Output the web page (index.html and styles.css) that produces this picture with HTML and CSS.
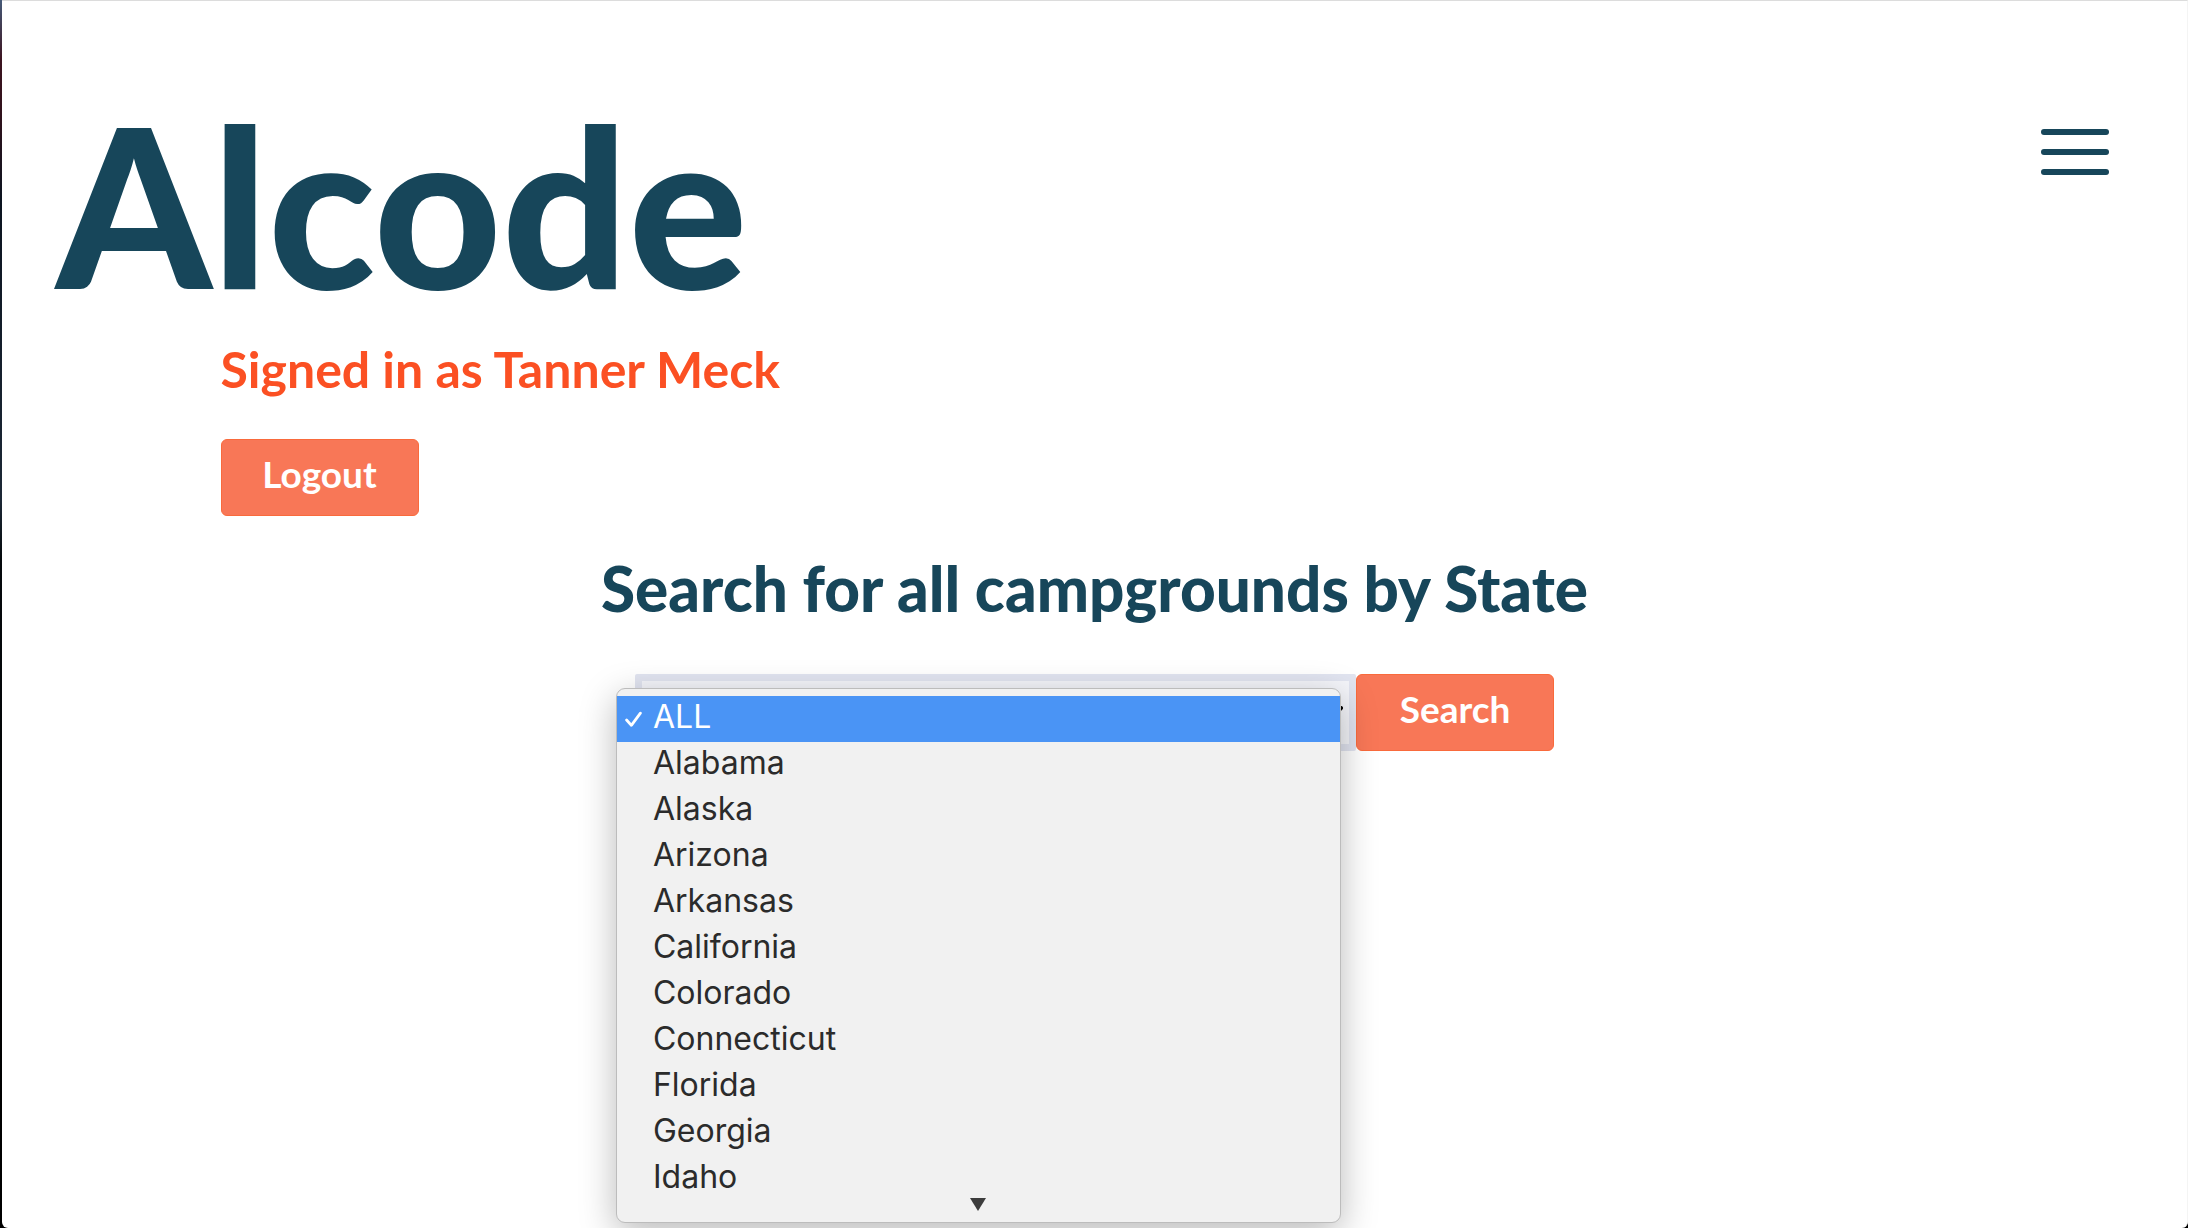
FILE: index.html
```html
<!DOCTYPE html>
<html lang="en">
<head>
<meta charset="utf-8">
<meta name="viewport" content="width=device-width, initial-scale=1">
<title>Alcode</title>
<link rel="stylesheet" href="styles.css">
</head>
<body>
<div class="window">
  <header class="site-header">
    <h1 class="brand">Alcode</h1>
    <button class="menu-toggle" type="button" aria-label="Menu">
      <span class="menu-bar"></span>
      <span class="menu-bar"></span>
      <span class="menu-bar"></span>
    </button>
  </header>
  <main>
    <section class="account">
      <p class="account-name">Signed in as Tanner Meck</p>
      <button class="button" type="button">Logout</button>
    </section>
    <section class="search">
      <h2 class="search-title"><label for="state">Search for all campgrounds by State</label></h2>
      <form class="search-form">
        <div class="field">
          <select class="field-select" id="state">
            <option>ALL</option>
          </select>
          <svg class="field-arrow" viewBox="0 0 20 12" aria-hidden="true"><path d="M2 2l8 8 8-8" fill="none" stroke="#000" stroke-width="4" stroke-linecap="round"/></svg>
          <div class="popup">
            <ul class="options" role="listbox" aria-label="State">
              <li class="option option-selected" role="option" aria-selected="true">
                <svg class="check" viewBox="0 0 16 16" aria-hidden="true"><path d="M1.500 8.500l4.500 5L14.500 2" fill="none" stroke="#fff" stroke-width="2.600" stroke-linecap="round" stroke-linejoin="round"/></svg>ALL</li>
              <li class="option" role="option">Alabama</li>
              <li class="option" role="option">Alaska</li>
              <li class="option" role="option">Arizona</li>
              <li class="option" role="option">Arkansas</li>
              <li class="option" role="option">California</li>
              <li class="option" role="option">Colorado</li>
              <li class="option" role="option">Connecticut</li>
              <li class="option" role="option">Florida</li>
              <li class="option" role="option">Georgia</li>
              <li class="option" role="option">Idaho</li>
            </ul>
            <svg class="more" viewBox="0 0 16 13" aria-hidden="true"><path d="M0 0h16L8 13z" fill="#3c3c3c"/></svg>
          </div>
        </div>
        <button class="button" type="submit">Search</button>
      </form>
    </section>
  </main>
</div>
</body>
</html>
```
FILE: styles.css
```css
* {
  box-sizing: border-box;
}

html {
  background: #000;
}

body {
  margin: 0;
  padding-left: 2px;
  min-height: 100vh;
  background: linear-gradient(#465a78, #3c1420 60px, #32121c 110px, #0c1420 200px, #1c2836 500px, #05090c 560px, #000 1100px);
  font-family: Lato, "Open Sans", sans-serif;
  color: #17465a;
}

.window {
  min-height: 100vh;
  border-top: 1px solid #dcdcdc;
  border-right: 1px solid #f4f4f4;
  border-radius: 0 0 6px 6px;
  background: #fff;
}

.site-header {
  display: flex;
  align-items: flex-start;
  justify-content: space-between;
  padding: 82px 78px 10px 54px;
}

.brand {
  margin: 0;
  font-size: 222px;
  font-weight: 900;
  line-height: 240px;
}

.menu-toggle {
  display: flex;
  flex-direction: column;
  gap: 14px;
  width: 68px;
  margin-top: 46px;
  padding: 0;
  border: 0;
  background: none;
}

.menu-bar {
  height: 6px;
  border-radius: 3px;
  background: #17465a;
}

.account {
  padding-left: 10%;
}

.account-name {
  margin: 0 0 34px;
  font-size: 50px;
  font-weight: 700;
  line-height: 72px;
  color: #fb5023;
}

.button {
  width: 198px;
  height: 77px;
  padding: 0 0 8px;
  border: 1px solid #f96a3c;
  border-radius: 6px;
  background: #f87757;
  font-family: inherit;
  font-size: 37px;
  font-weight: 700;
  color: #fff;
}

.search-title {
  margin: 36px 0 50px;
  font-size: 62px;
  font-weight: 900;
  line-height: 72px;
  text-align: center;
}

.search-form {
  display: flex;
  justify-content: center;
}

.field {
  position: relative;
  width: 33%;
}

.field-select {
  appearance: none;
  width: 100%;
  height: 77px;
  padding: 0 24px;
  border: 7px solid #e1e4f0;
  border-radius: 2px;
  background: #f4f5fa;
  font-family: inherit;
  font-size: 37px;
  color: #17465a;
}

.field-arrow {
  position: absolute;
  top: 32px;
  right: 13px;
  width: 20px;
  height: 12px;
}

.popup {
  position: absolute;
  top: 14px;
  left: -19px;
  right: 15px;
  padding: 7px 0 11px;
  border: 1px solid #bcbcbc;
  border-radius: 9px;
  background: #f1f1f1;
  box-shadow: 0 10px 36px rgba(0, 0, 0, 0.28);
  font-family: Inter, "Liberation Sans", sans-serif;
  font-size: 32px;
  color: #2b2b2b;
}

.options {
  margin: 0;
  padding: 0;
  list-style: none;
}

.option {
  position: relative;
  padding: 0 0 4px 36px;
  line-height: 42px;
}

.option-selected {
  background: #4a94f5;
  color: #fff;
}

.check {
  position: absolute;
  top: 15px;
  left: 8px;
  width: 17px;
  height: 17px;
}

.more {
  display: block;
  width: 16px;
  height: 13px;
  margin: -4px auto 0;
}
```
